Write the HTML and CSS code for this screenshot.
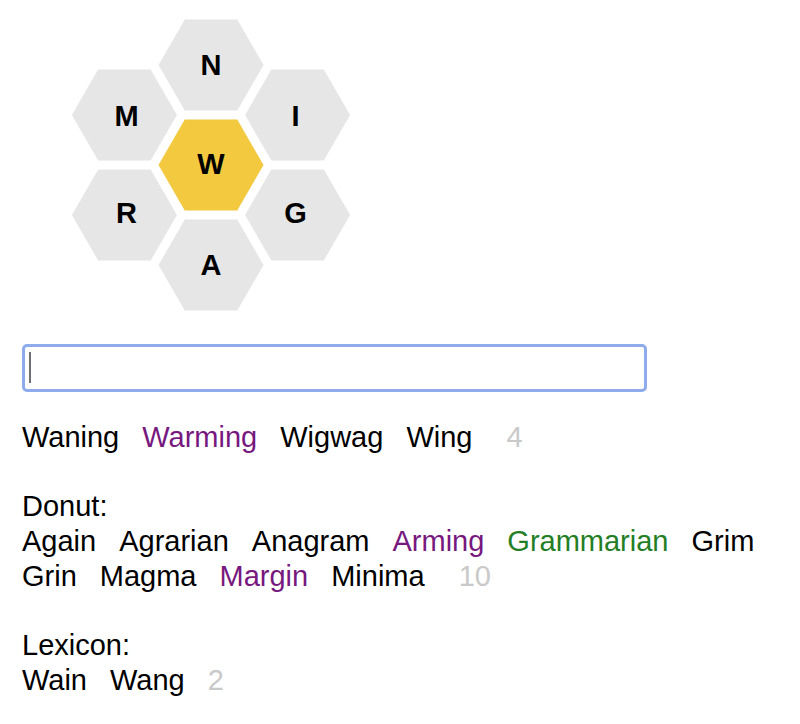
FILE: index.html
```html
<!DOCTYPE html>
<html lang="en">
<head>
<meta charset="utf-8">
<title>Hive</title>
<link rel="stylesheet" href="styles.css">
</head>
<body>
<main class="page">
  <svg class="hive" width="300" height="300" viewBox="0 0 300 300" aria-label="Letter hive">
    <g class="cell">
      <polygon class="hex" points="97.5,50 123.75,4.53 176.25,4.53 202.5,50 176.25,95.47 123.75,95.47"/>
      <text class="letter" x="150" y="60">N</text>
    </g>
    <g class="cell">
      <polygon class="hex" points="10.9,100 37.15,54.53 89.65,54.53 115.9,100 89.65,145.47 37.15,145.47"/>
      <text class="letter" x="65.5" y="110.5">M</text>
    </g>
    <g class="cell">
      <polygon class="hex" points="184.1,100 210.35,54.53 262.85,54.53 289.1,100 262.85,145.47 210.35,145.47"/>
      <text class="letter" x="234.5" y="110.5">I</text>
    </g>
    <g class="cell">
      <polygon class="hex hex-center" points="97.5,150 123.75,104.53 176.25,104.53 202.5,150 176.25,195.47 123.75,195.47"/>
      <text class="letter" x="150" y="159">W</text>
    </g>
    <g class="cell">
      <polygon class="hex" points="10.9,200 37.15,154.53 89.65,154.53 115.9,200 89.65,245.47 37.15,245.47"/>
      <text class="letter" x="65.5" y="207.5">R</text>
    </g>
    <g class="cell">
      <polygon class="hex" points="184.1,200 210.35,154.53 262.85,154.53 289.1,200 262.85,245.47 210.35,245.47"/>
      <text class="letter" x="234.5" y="207.5">G</text>
    </g>
    <g class="cell">
      <polygon class="hex" points="97.5,250 123.75,204.53 176.25,204.53 202.5,250 176.25,295.47 123.75,295.47"/>
      <text class="letter" x="150" y="260">A</text>
    </g>
  </svg>

  <div class="entry" role="textbox" aria-label="Enter a word"><span class="caret"></span></div>

  <section class="group">
    <div class="words">
      <span>Waning</span>
      <span class="found">Warming</span>
      <span>Wigwag</span>
      <span>Wing</span>
      <span class="count count-spaced">4</span>
    </div>
  </section>

  <section class="group">
    <div class="group-title">Donut:</div>
    <div class="words">
      <span>Again</span>
      <span>Agrarian</span>
      <span>Anagram</span>
      <span class="found">Arming</span>
      <span class="pangram">Grammarian</span>
      <span>Grim</span>
      <span>Grin</span>
      <span>Magma</span>
      <span class="found">Margin</span>
      <span>Minima</span>
      <span class="count count-spaced">10</span>
    </div>
  </section>

  <section class="group">
    <div class="group-title">Lexicon:</div>
    <div class="words">
      <span>Wain</span>
      <span>Wang</span>
      <span class="count">2</span>
    </div>
  </section>
</main>
</body>
</html>
```

FILE: styles.css
```css
html, body {
  margin: 0;
  padding: 0;
  background: #ffffff;
}

body {
  font-family: "Liberation Sans", Arial, Helvetica, sans-serif;
  color: #000000;
}

.page {
  padding: 15px 10px 0 22px;
}

.hive {
  display: block;
  margin-left: 39px;
}

.hex {
  fill: #e6e6e6;
}

.hex-center {
  fill: #f3c93f;
}

.letter {
  font-family: "Liberation Sans", Arial, Helvetica, sans-serif;
  font-weight: 700;
  font-size: 29px;
  fill: #000000;
  text-anchor: middle;
}

.entry {
  box-sizing: border-box;
  width: 625px;
  height: 48px;
  margin-top: 29px;
  border: 3px solid #8eacec;
  border-radius: 5px;
  padding: 5px 0 0 4px;
  background: #ffffff;
}

.caret {
  display: block;
  width: 2px;
  height: 31px;
  background: #707070;
}

.group {
  margin-top: 34px;
  font-size: 29px;
  line-height: 35px;
}

.group:first-of-type {
  margin-top: 27.5px;
}

.words {
  display: flex;
  flex-wrap: wrap;
  column-gap: 23px;
}

.found {
  color: #77187f;
}

.pangram {
  color: #237e25;
}

.count {
  color: #c9c9c9;
}

.count-spaced {
  margin-left: 11px;
}
```
